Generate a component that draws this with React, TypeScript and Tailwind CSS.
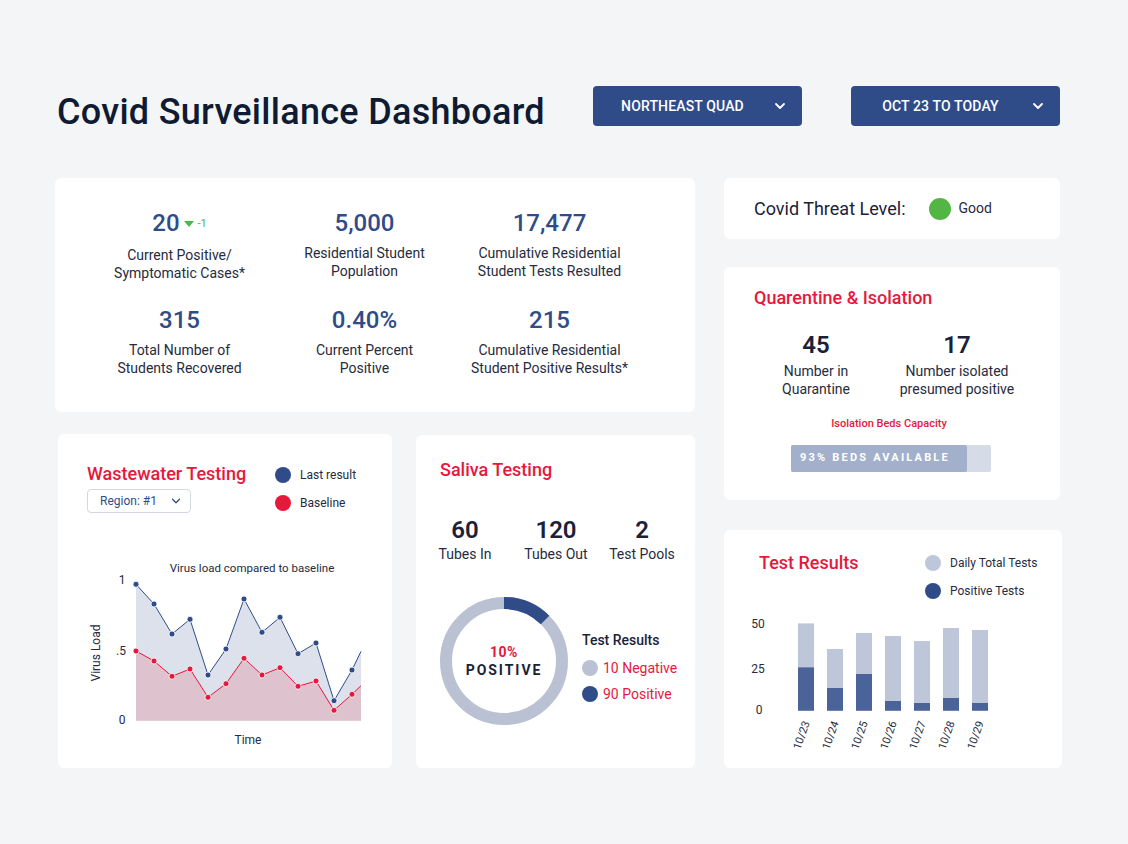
import { ChevronDown } from 'lucide-react';

const NAVY = '#2f4c89';
const RED = '#e5193c';

const blue = [25.3, 45, 75, 60.3, 116, 90, 40, 73.3, 58.3, 94.7, 84, 141.7, 111, 92.3];
const red = [92, 102, 117.3, 110, 138.3, 124.7, 99.3, 116, 108.7, 127.3, 122, 151.3, 135.3, 126.7];
const xs = blue.map((_, i) => (i === 13 ? 275 : 50 + 18 * i));
const BASE = 161.7;

const bars = [
  { d: '10/23', total: 87.3, pos: 43.3 },
  { d: '10/24', total: 61.7, pos: 22.7 },
  { d: '10/25', total: 77.7, pos: 36.7 },
  { d: '10/26', total: 74.7, pos: 9.7 },
  { d: '10/27', total: 69.7, pos: 7.7 },
  { d: '10/28', total: 82.7, pos: 12.7 },
  { d: '10/29', total: 80.7, pos: 7.7 },
];

function Stat({ value, label, extra }: { value: string; label: string[]; extra?: boolean }) {
  return (
    <div className="flex flex-col items-center text-center">
      <div className="flex items-center h-[28px]">
        <span className="text-[24px] leading-[28px] font-medium text-[#2f4c89]">{value}</span>
        {extra && (
          <span className="flex items-center ml-[4px] mt-[2px]">
            <svg width="10" height="7" viewBox="0 0 10 7">
              <path d="M0 0 L10 0 L5 6 Z" fill="#4cb848" />
            </svg>
            <span className="text-[11px] text-[#4cb848] ml-[4px]">-1</span>
          </span>
        )}
      </div>
      <div className={`${extra ? 'mt-[9px]' : 'mt-[7px]'} text-[14px] leading-[18px] text-[#262b3d]`}>
        {label.map((l) => (
          <div key={l}>{l}</div>
        ))}
      </div>
    </div>
  );
}

function Dropdown({ label }: { label: string }) {
  return (
    <button className="w-[209px] h-[40px] rounded-[4px] bg-[#2f4c89] text-white flex items-center pr-[14px]">
      <span className="flex-1 text-center text-[14px] font-medium tracking-[0.01em]">{label}</span>
      <ChevronDown size={16} strokeWidth={2.75} />
    </button>
  );
}

function LegendDot({ color, label, textClass }: { color: string; label: string; textClass: string }) {
  return (
    <div className="flex items-center h-[16px]">
      <span className="w-[16px] h-[16px] rounded-full" style={{ background: color }} />
      <span className={textClass}>{label}</span>
    </div>
  );
}

function WastewaterChart() {
  const line = (arr: number[]) => arr.map((y, i) => `${xs[i]},${y}`).join(' ');
  const area = (arr: number[]) => `M${xs[0]},${BASE} L${line(arr)} L${xs[13]},${BASE} Z`;
  return (
    <svg width="290" height="195" viewBox="0 0 290 195" className="block">
      <text x="166" y="13" textAnchor="middle" fontSize="11.5" fill="#262b3d">Virus load compared to baseline</text>
      <path d={area(blue)} fill="#dde1ec" />
      <path d={area(red)} fill="#dec3cf" />
      <polyline points={line(blue)} fill="none" stroke="#2f4c89" strokeWidth="1" />
      <polyline points={line(red)} fill="none" stroke={RED} strokeWidth="1" />
      {blue.slice(0, 13).map((y, i) => (
        <circle key={'b' + i} cx={xs[i]} cy={y} r="3" fill="#2f4c89" stroke="#fff" strokeWidth="0.8" />
      ))}
      {red.slice(0, 13).map((y, i) => (
        <circle key={'r' + i} cx={xs[i]} cy={y} r="3" fill={RED} stroke="#fff" strokeWidth="0.8" />
      ))}
      <text x="36" y="25" textAnchor="middle" fontSize="12" fill="#262b3d">1</text>
      <text x="35" y="96" textAnchor="middle" fontSize="12" fill="#262b3d">.5</text>
      <text x="36" y="165" textAnchor="middle" fontSize="12" fill="#262b3d">0</text>
      <text x="14" y="94" textAnchor="middle" fontSize="12" fill="#262b3d" transform="rotate(-90 14 94)">Virus Load</text>
      <text x="162" y="185" textAnchor="middle" fontSize="12" fill="#262b3d">Time</text>
    </svg>
  );
}

function BarChart() {
  const base = 96.7;
  return (
    <svg width="280" height="145" viewBox="0 0 280 145" className="block">
      <text x="14" y="14" textAnchor="middle" fontSize="12" fill="#262b3d">50</text>
      <text x="14" y="59" textAnchor="middle" fontSize="12" fill="#262b3d">25</text>
      <text x="15" y="100" textAnchor="middle" fontSize="12" fill="#262b3d">0</text>
      {bars.map((b, i) => {
        const x = 54 + 29 * i;
        return (
          <g key={b.d}>
            <rect x={x} y={base - b.total} width="16" height={b.total} fill="#bec7da" />
            <rect x={x} y={base - b.pos} width="16" height={b.pos} fill="#4a6399" />
            <text
              x={x + 12}
              y={base + 12}
              textAnchor="end"
              fontSize="11"
              fill="#262b3d"
              transform={`rotate(-70 ${x + 12} ${base + 12})`}
            >
              {b.d}
            </text>
          </g>
        );
      })}
    </svg>
  );
}

export default function App() {
  return (
    <div className="w-[1128px] h-[844px] bg-[#f4f5f7] font-['Roboto','Liberation_Sans',sans-serif] text-[#1b2238]">
      <div className="pl-[55px] pt-[86px]">
        {/* Header */}
        <div className="flex items-center h-[40px]">
          <h1 className="w-[538px] text-[36px] font-medium text-[#0f1a33] tracking-[0.008em] pl-[2px] mt-[12px]">
            Covid Surveillance Dashboard
          </h1>
          <Dropdown label="NORTHEAST QUAD" />
          <div className="ml-[49px]">
            <Dropdown label="OCT 23 TO TODAY" />
          </div>
        </div>

        <div className="flex mt-[52px]">
          {/* Left column */}
          <div className="w-[640px]">
            <div className="h-[234px] bg-white rounded-md pl-[32px] pt-[31px]">
              <div className="grid grid-cols-[185px_185px_185px] gap-y-[24px]">
                <Stat value="20" extra label={['Current Positive/', 'Symptomatic Cases*']} />
                <Stat value="5,000" label={['Residential Student', 'Population']} />
                <Stat value="17,477" label={['Cumulative Residential', 'Student Tests Resulted']} />
                <Stat value="315" label={['Total Number of', 'Students Recovered']} />
                <Stat value="0.40%" label={['Current Percent', 'Positive']} />
                <Stat value="215" label={['Cumulative Residential', 'Student Positive Results*']} />
              </div>
            </div>

            <div className="flex mt-[22px]">
              {/* Wastewater */}
              <div className="ml-[3px] w-[334px] h-[334px] bg-white rounded-md pl-[29px] pt-[28px]">
                <div className="flex">
                  <div className="w-[187px]">
                    <div className="text-[18px] leading-[24px] font-medium text-[#e5193c]">Wastewater Testing</div>
                    <div className="mt-[3px] w-[104px] h-[24px] border border-[#d4d8e0] rounded-[4px] flex items-center pl-[12px] pr-[7px] justify-between">
                      <span className="text-[12px] text-[#2f4c89]">Region: #1</span>
                      <ChevronDown size={14} strokeWidth={2.25} className="text-[#2f4c89]" />
                    </div>
                  </div>
                  <div className="flex flex-col gap-[12px] mt-[5px] ml-[1px]">
                    <LegendDot color={NAVY} label="Last result" textClass="ml-[9px] text-[12px] text-[#262b3d]" />
                    <LegendDot color={RED} label="Baseline" textClass="ml-[9px] text-[12px] text-[#262b3d]" />
                  </div>
                </div>
                <div className="mt-[46px] -ml-[1px]">
                  <WastewaterChart />
                </div>
              </div>

              {/* Saliva */}
              <div className="ml-[24px] mt-[1px] w-[279px] h-[333px] bg-white rounded-md pt-[23px]">
                <div className="pl-[24px] text-[18px] leading-[24px] font-medium text-[#e5193c]">Saliva Testing</div>
                <div className="flex pl-[10px] mt-[34px]">
                  {[
                    ['60', 'Tubes In', 'w-[78px]'],
                    ['120', 'Tubes Out', 'w-[104px]'],
                    ['2', 'Test Pools', 'w-[68px]'],
                  ].map(([v, l, w]) => (
                    <div key={l} className={`${w} flex flex-col items-center`}>
                      <div className="text-[24px] leading-[28px] font-semibold">{v}</div>
                      <div className="mt-[1px] text-[14px] leading-[18px] text-[#262b3d]">{l}</div>
                    </div>
                  ))}
                </div>
                <div className="flex pl-[24px] mt-[34px]">
                  <div className="relative w-[128px] h-[128px]">
                    <svg width="128" height="128" viewBox="0 0 128 128">
                      <circle cx="64" cy="64" r="58" fill="none" stroke="#b9c1d3" strokeWidth="12" />
                      <path d="M64 6 A58 58 0 0 1 105.01 22.99" fill="none" stroke="#2f4c89" strokeWidth="12" />
                    </svg>
                    <div className="absolute inset-0 flex flex-col items-center justify-center">
                      <div className="text-[14px] leading-[18px] font-bold text-[#e5193c] tracking-[0.04em]">10%</div>
                      <div className="text-[14px] leading-[18px] font-bold tracking-[0.14em] text-[#1b2238]">POSITIVE</div>
                    </div>
                  </div>
                  <div className="ml-[14px] mt-[33px]">
                    <div className="text-[14px] leading-[20px] font-medium">Test Results</div>
                    <div className="mt-[10px] flex flex-col gap-[10px]">
                      <LegendDot color="#b9c1d3" label="10 Negative" textClass="ml-[5px] text-[14px] text-[#e5193c]" />
                      <LegendDot color={NAVY} label="90 Positive" textClass="ml-[5px] text-[14px] text-[#e5193c]" />
                    </div>
                  </div>
                </div>
              </div>
            </div>
          </div>

          {/* Right column */}
          <div className="ml-[29px] w-[336px]">
            <div className="h-[61px] bg-white rounded-md flex items-center pl-[30px]">
              <span className="text-[18px] text-[#1b2238]">Covid Threat Level:</span>
              <span className="ml-[23px] w-[22px] h-[22px] rounded-full bg-[#52b544]" />
              <span className="ml-[8px] text-[14px] text-[#262b3d]">Good</span>
            </div>

            <div className="mt-[28px] h-[233px] bg-white rounded-md pt-[19px]">
              <div className="pl-[30px] text-[18px] leading-[24px] font-medium text-[#e5193c]">Quarentine &amp; Isolation</div>
              <div className="flex pl-[30px] mt-[21px]">
                <div className="w-[124px] flex flex-col items-center text-center">
                  <div className="text-[24px] leading-[28px] font-semibold">45</div>
                  <div className="mt-[3px] text-[14px] leading-[18px] text-[#262b3d]">
                    <div>Number in</div>
                    <div>Quarantine</div>
                  </div>
                </div>
                <div className="w-[158px] flex flex-col items-center text-center">
                  <div className="text-[24px] leading-[28px] font-semibold">17</div>
                  <div className="mt-[3px] text-[14px] leading-[18px] text-[#262b3d]">
                    <div>Number isolated</div>
                    <div>presumed positive</div>
                  </div>
                </div>
              </div>
              <div className="mt-[19px] text-center pr-[6px] text-[11px] leading-[14px] font-medium text-[#e5193c]">
                Isolation Beds Capacity
              </div>
              <div className="mt-[14px] ml-[67px] w-[200px] h-[27px] rounded-[2px] bg-[#d5dbe7] flex">
                <div className="w-[176px] h-full rounded-[2px] bg-[#a3b0cb] flex items-center pl-[9px]">
                  <span className="text-[11px] font-bold tracking-[0.2em] text-white">93% BEDS AVAILABLE</span>
                </div>
              </div>
            </div>

            <div className="mt-[30px] w-[338px] h-[238px] bg-white rounded-md pt-[21px]">
              <div className="flex">
                <div className="w-[174px] pl-[35px] text-[18px] leading-[24px] font-medium text-[#e5193c]">Test Results</div>
                <div className="flex flex-col gap-[12px] mt-[4px] ml-[27px]">
                  <LegendDot color="#bec7da" label="Daily Total Tests" textClass="ml-[9px] text-[12px] text-[#262b3d]" />
                  <LegendDot color={NAVY} label="Positive Tests" textClass="ml-[9px] text-[12px] text-[#262b3d]" />
                </div>
              </div>
              <div className="mt-[15px] ml-[20px]">
                <BarChart />
              </div>
            </div>
          </div>
        </div>
      </div>
    </div>
  );
}
